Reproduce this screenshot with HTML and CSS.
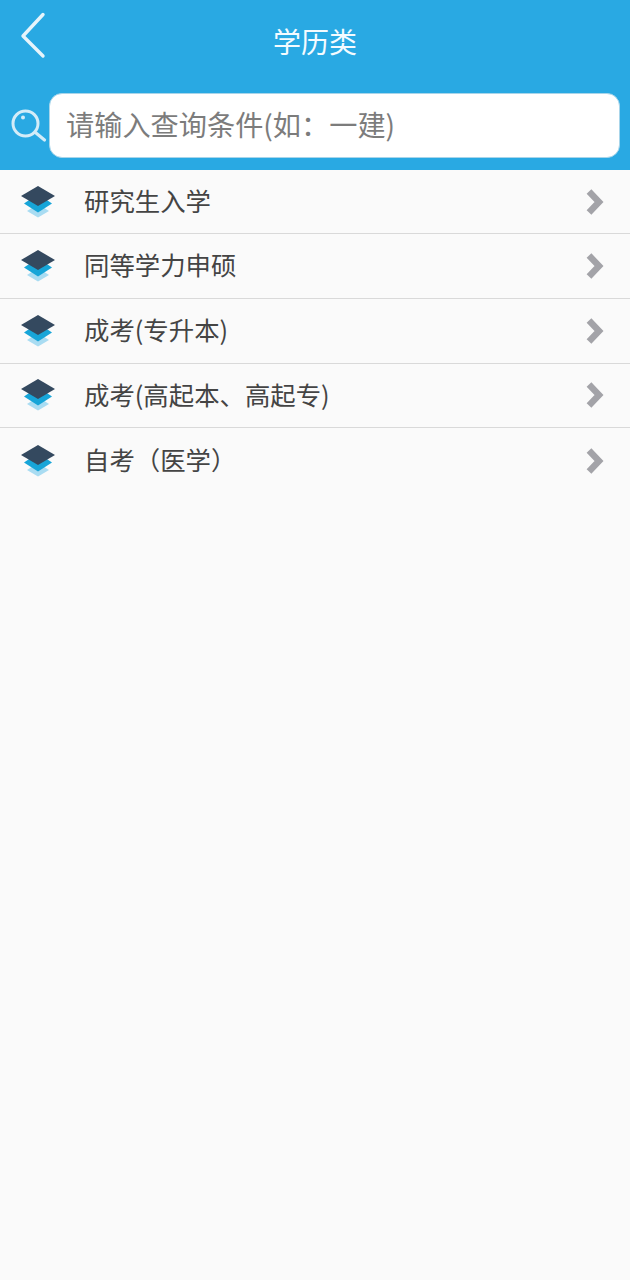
FILE: index.html
```html
<!DOCTYPE html>
<html lang="zh">
<head>
<meta charset="utf-8">
<title>学历类</title>
<link rel="stylesheet" href="styles.css">
</head>
<body>
<header class="top">
  <div class="titlebar">
    <svg class="back" width="30" height="50" viewBox="0 0 30 50"><path d="M24 3.500 L4 25 L24 45" fill="none" stroke="#e6f4fb" stroke-width="3.400" stroke-linecap="round" stroke-linejoin="round"/></svg>
    <h1 class="title">学历类</h1>
  </div>
  <div class="searchrow">
    <svg class="lens" width="38" height="38" viewBox="0 0 38 38"><circle cx="14.500" cy="17.500" r="12.500" fill="none" stroke="#d3ecf8" stroke-width="3"/><circle cx="12" cy="11.500" r="2" fill="#d3ecf8"/><path d="M25 27 L33.500 34" stroke="#d3ecf8" stroke-width="3.200" stroke-linecap="round"/></svg>
    <div class="search">请输入查询条件(如：一建)</div>
  </div>
</header>
<ul class="list">
  <li class="row"><svg class="layers" width="36" height="34" viewBox="0 0 36 34"><use href="#stack"/></svg><span class="label">研究生入学</span><svg class="chev" width="22" height="30" viewBox="0 0 22 30"><use href="#arrow"/></svg></li>
  <li class="row"><svg class="layers" width="36" height="34" viewBox="0 0 36 34"><use href="#stack"/></svg><span class="label">同等学力申硕</span><svg class="chev" width="22" height="30" viewBox="0 0 22 30"><use href="#arrow"/></svg></li>
  <li class="row"><svg class="layers" width="36" height="34" viewBox="0 0 36 34"><use href="#stack"/></svg><span class="label">成考(专升本)</span><svg class="chev" width="22" height="30" viewBox="0 0 22 30"><use href="#arrow"/></svg></li>
  <li class="row"><svg class="layers" width="36" height="34" viewBox="0 0 36 34"><use href="#stack"/></svg><span class="label">成考(高起本、高起专)</span><svg class="chev" width="22" height="30" viewBox="0 0 22 30"><use href="#arrow"/></svg></li>
  <li class="row"><svg class="layers" width="36" height="34" viewBox="0 0 36 34"><use href="#stack"/></svg><span class="label">自考（医学）</span><svg class="chev" width="22" height="30" viewBox="0 0 22 30"><use href="#arrow"/></svg></li>
</ul>
<svg class="defs" width="0" height="0">
  <defs>
    <g id="stack">
      <path d="M18 19 L29 26 L18 32.500 L7 26 Z" fill="#a9dcf2"/>
      <path d="M18 9 L32 18.500 L18 27.500 L4 18.500 Z" fill="#17a5d8"/>
      <path d="M18 1 L35 11 L18 21 L1 11 Z" fill="#34495f"/>
    </g>
    <path id="arrow" d="M6 4.500 L16 15 L6 25.500" fill="none" stroke="#a3a3a8" stroke-width="6.500"/>
  </defs>
</svg>
</body>
</html>
```

FILE: styles.css
```css
* { box-sizing: border-box; }
html, body { margin: 0; padding: 0; }
body {
  width: 630px;
  height: 1280px;
  overflow: hidden;
  background: #fafafa;
  font-family: "Noto Sans CJK SC", "Liberation Sans", sans-serif;
}
.top {
  height: 170px;
  background: #29a9e3;
  display: flex;
  flex-direction: column;
}
.titlebar {
  height: 93px;
  display: flex;
  align-items: flex-start;
  justify-content: center;
  position: relative;
}
.back { position: absolute; left: 19px; top: 11px; }
.title {
  margin: 20px 0 0;
  font-size: 28px;
  line-height: 42px;
  font-weight: 400;
  color: #f4fbff;
}
.searchrow {
  display: flex;
  align-items: flex-start;
  height: 65px;
  padding-left: 10px;
}
.lens { flex: none; margin-left: 1px; margin-top: 13px; }
.search {
  width: 571px;
  height: 65px;
  background: #fff;
  border: 1px solid #a8d5ea;
  border-radius: 13px;
  padding-left: 16px;
  font-size: 28.2px;
  line-height: 60px;
  color: #7c7c7c;
}
.list { list-style: none; margin: 0; padding: 0; }
.row {
  height: 64.8px;
  display: flex;
  align-items: center;
  border-bottom: 1px solid #d9d9d9;
  padding-left: 20px;
  padding-right: 25px;
}
.row:first-child { height: 64px; }
.row:last-child { border-bottom: none; }
.layers { flex: none; margin-right: 28px; }
.label {
  flex: 1;
  font-size: 25.4px;
  line-height: 60px;
  margin-top: -3px;
  color: #444;
}
.chev { flex: none; }
.defs { position: absolute; }
```
